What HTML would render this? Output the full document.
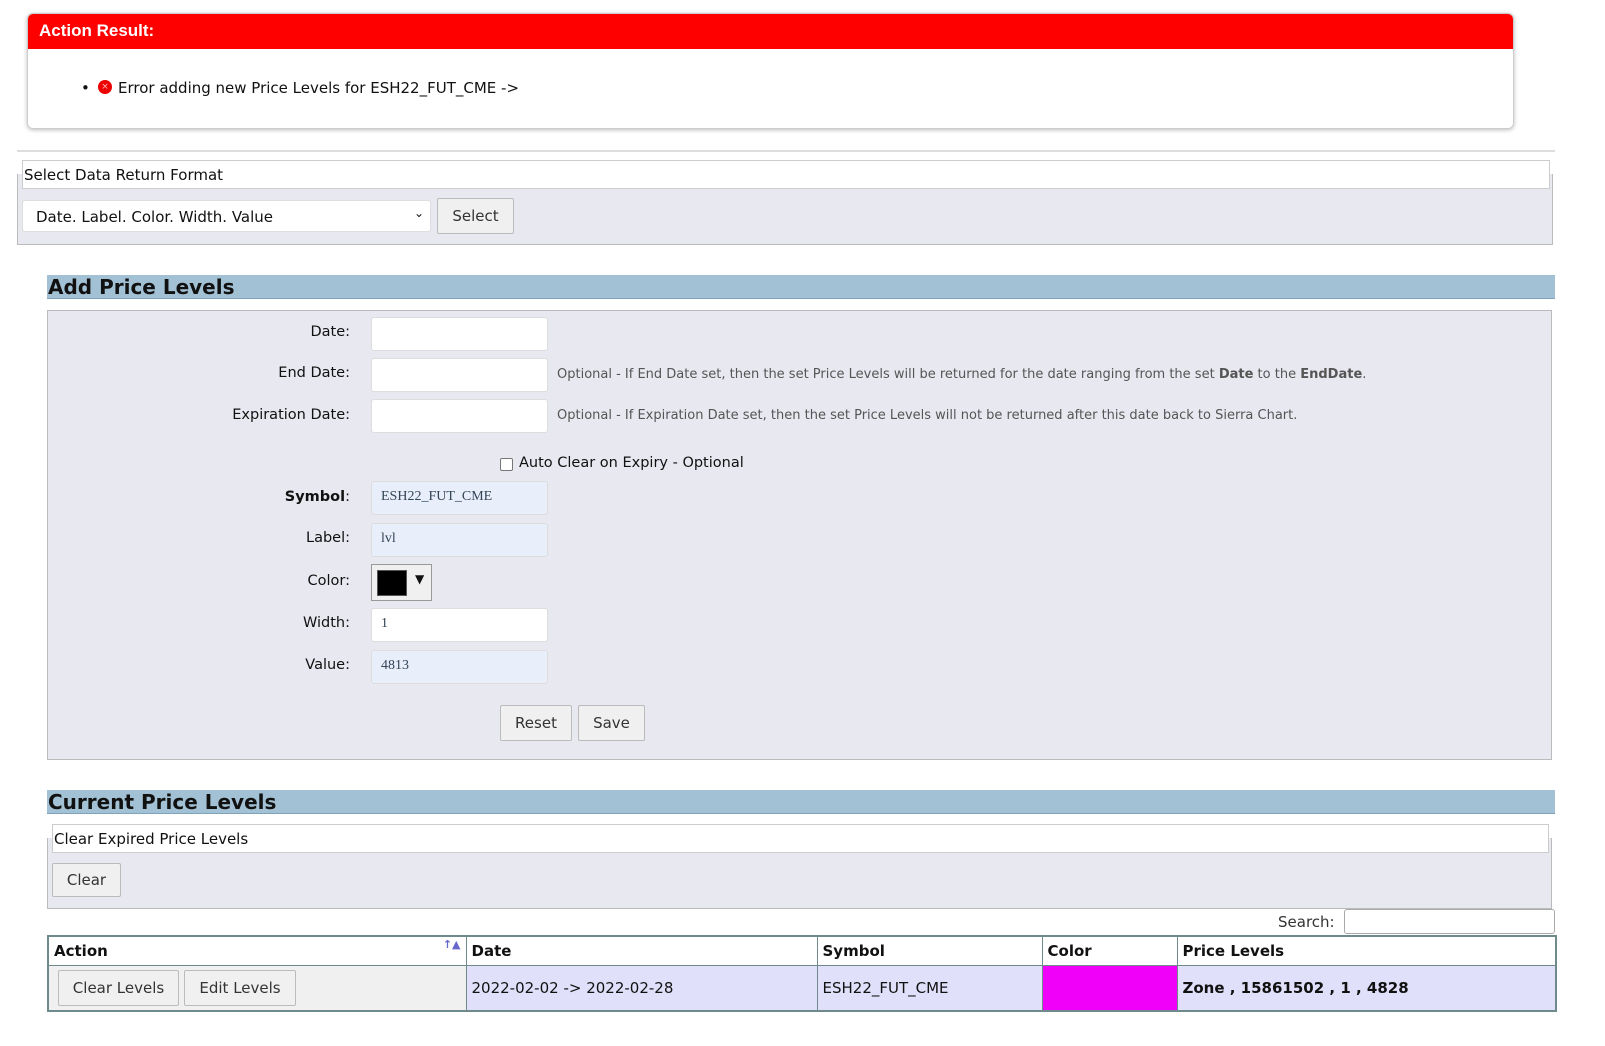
<!DOCTYPE html>
<html><head><meta charset="utf-8"><style>
*{box-sizing:border-box;margin:0;padding:0}
body{width:1605px;height:1046px;background:#fff;position:relative;overflow:hidden;font-family:"DejaVu Sans","Liberation Sans",sans-serif;font-size:14.5px;color:#111}
.a{position:absolute;white-space:nowrap}
.inp{position:absolute;background:#fff;border:1px solid #ddd;border-radius:3px;height:34px;width:177px;left:371px;font-family:"Liberation Serif",serif;font-size:14px;color:#345;padding:7px 9px}
.blue{background:#e8effb}
.btn{position:absolute;background:#f0f0f0;border:1px solid #bbb;border-radius:2px;text-align:center;color:#333;font-size:15px}
.lbl{position:absolute;right:1255px;white-space:nowrap;text-align:right}
.hdr{position:absolute;left:47px;width:1508px;height:24px;background:#a3c1d4;border-bottom:1px solid #7fa3bb;font-weight:bold;font-size:20px;padding-left:1px;line-height:24px;color:#111}
.opt{position:absolute;left:557px;color:#555;font-size:13px;white-space:nowrap}
th,td{border:1px solid #6f8a8a;text-align:left}
</style></head><body>
<div class="a" style="left:27px;top:13px;width:1487px;height:116px;border:1px solid #ccc;border-radius:6px;box-shadow:0 1px 4px #bbb;overflow:hidden">
 <div style="background:#f00;height:35px;color:#fff;font-weight:bold;font-size:17px;padding:7px 11px;font-family:'Liberation Sans',sans-serif">Action Result:</div>
</div>
<div class="a" style="left:81px;top:79px;font-size:15px">•</div>
<div class="a" style="left:98px;top:80px;width:14px;height:14px;border-radius:50%;background:#e00;color:#fbb;font-size:9px;text-align:center;line-height:14px">×</div>
<div class="a" style="left:118px;top:79px;font-size:15px">Error adding new Price Levels for ESH22_FUT_CME -&gt;</div>
<div class="a" style="left:17px;top:150px;width:1538px;height:2px;background:#ddd"></div>
<div class="a" style="left:17px;top:174px;width:1536px;height:71px;background:#e8e8f0;border:1px solid #bbb;border-top:none"></div>
<div class="a" style="left:22px;top:160px;width:1528px;height:29px;background:#fff;border:1px solid #ccc;padding:5px 1px;font-size:15px">Select Data Return Format</div>
<div class="a" style="left:22px;top:200px;width:409px;height:32px;background:#fff;border:1px solid #ddd;border-radius:3px;padding:7px 13px;font-size:15px">Date. Label. Color. Width. Value<span style="position:absolute;right:6px;top:5px;font-size:12px">&#8964;</span></div>
<div class="btn" style="left:437px;top:198px;width:77px;height:36px;line-height:34px">Select</div>

<div class="hdr" style="top:275px">Add Price Levels</div>
<div class="a" style="left:47px;top:310px;width:1505px;height:450px;background:#e8e8f0;border:1px solid #bbb"></div>
<div class="lbl" style="top:324px">Date:</div>
<div class="inp" style="top:317px"></div>
<div class="lbl" style="top:365px">End Date:</div>
<div class="inp" style="top:358px"></div>
<div class="opt" style="top:367px">Optional - If End Date set, then the set Price Levels will be returned for the date ranging from the set <b>Date</b> to the <b>EndDate</b>.</div>
<div class="lbl" style="top:407px">Expiration Date:</div>
<div class="inp" style="top:399px"></div>
<div class="opt" style="top:408px">Optional - If Expiration Date set, then the set Price Levels will not be returned after this date back to Sierra Chart.</div>
<div class="a" style="left:500px;top:458px;width:13px;height:13px;border:1px solid #777;border-radius:2px;background:#fff"></div>
<div class="a" style="left:519px;top:455px">Auto Clear on Expiry - Optional</div>
<div class="lbl" style="top:489px"><b>Symbol</b>:</div>
<div class="inp blue" style="top:481px">ESH22_FUT_CME</div>
<div class="lbl" style="top:530px">Label:</div>
<div class="inp blue" style="top:523px">lvl</div>
<div class="lbl" style="top:573px">Color:</div>
<div class="a" style="left:371px;top:564px;width:61px;height:37px;background:#f0f0f0;border:1px solid #999"><div style="position:absolute;left:5px;top:5px;width:30px;height:26px;background:#000;border:1px solid #555"></div><div style="position:absolute;left:43px;top:7px;font-size:12px">▼</div></div>
<div class="lbl" style="top:615px">Width:</div>
<div class="inp" style="top:608px">1</div>
<div class="lbl" style="top:657px">Value:</div>
<div class="inp blue" style="top:650px">4813</div>
<div class="btn" style="left:500px;top:705px;width:72px;height:36px;line-height:34px">Reset</div>
<div class="btn" style="left:578px;top:705px;width:67px;height:36px;line-height:34px">Save</div>

<div class="hdr" style="top:790px">Current Price Levels</div>
<div class="a" style="left:47px;top:838px;width:1505px;height:71px;background:#e8e8f0;border:1px solid #bbb;border-top:none"></div>
<div class="a" style="left:52px;top:824px;width:1497px;height:29px;background:#fff;border:1px solid #ccc;padding:5px 1px;font-size:15px">Clear Expired Price Levels</div>
<div class="btn" style="left:52px;top:863px;width:69px;height:34px;line-height:32px">Clear</div>
<div class="a" style="left:1278px;top:913px;color:#333;font-size:15px">Search:</div>
<div class="a" style="left:1344px;top:909px;width:211px;height:25px;border:1px solid #aaa;border-radius:3px;background:#fff"></div>
<table class="a" style="left:47px;top:935px;width:1510px;border-collapse:collapse;border:2px solid #6f8a8a;font-size:15px">
<tr style="height:29px;font-weight:bold;background:#fff"><th style="width:418px;padding-left:5px;position:relative">Action<span style="position:absolute;right:5px;top:1px;font-size:11px;color:#66c">↑▲</span></th><th style="width:351px;padding-left:5px">Date</th><th style="width:225px;padding-left:5px">Symbol</th><th style="width:135px;padding-left:5px">Color</th><th style="padding-left:5px">Price Levels</th></tr>
<tr style="height:46px;background:#e0e0fa"><td style="background:#f0f0f0;position:relative"><div class="btn" style="left:9px;top:4px;width:121px;height:36px;line-height:34px">Clear Levels</div><div class="btn" style="left:135px;top:4px;width:112px;height:36px;line-height:34px">Edit Levels</div></td><td style="padding-left:5px">2022-02-02 -&gt; 2022-02-28</td><td style="padding-left:5px">ESH22_FUT_CME</td><td style="background:#f000f8"></td><td style="padding-left:5px;font-weight:bold">Zone , 15861502 , 1 , 4828</td></tr>
</table>
</body></html>
